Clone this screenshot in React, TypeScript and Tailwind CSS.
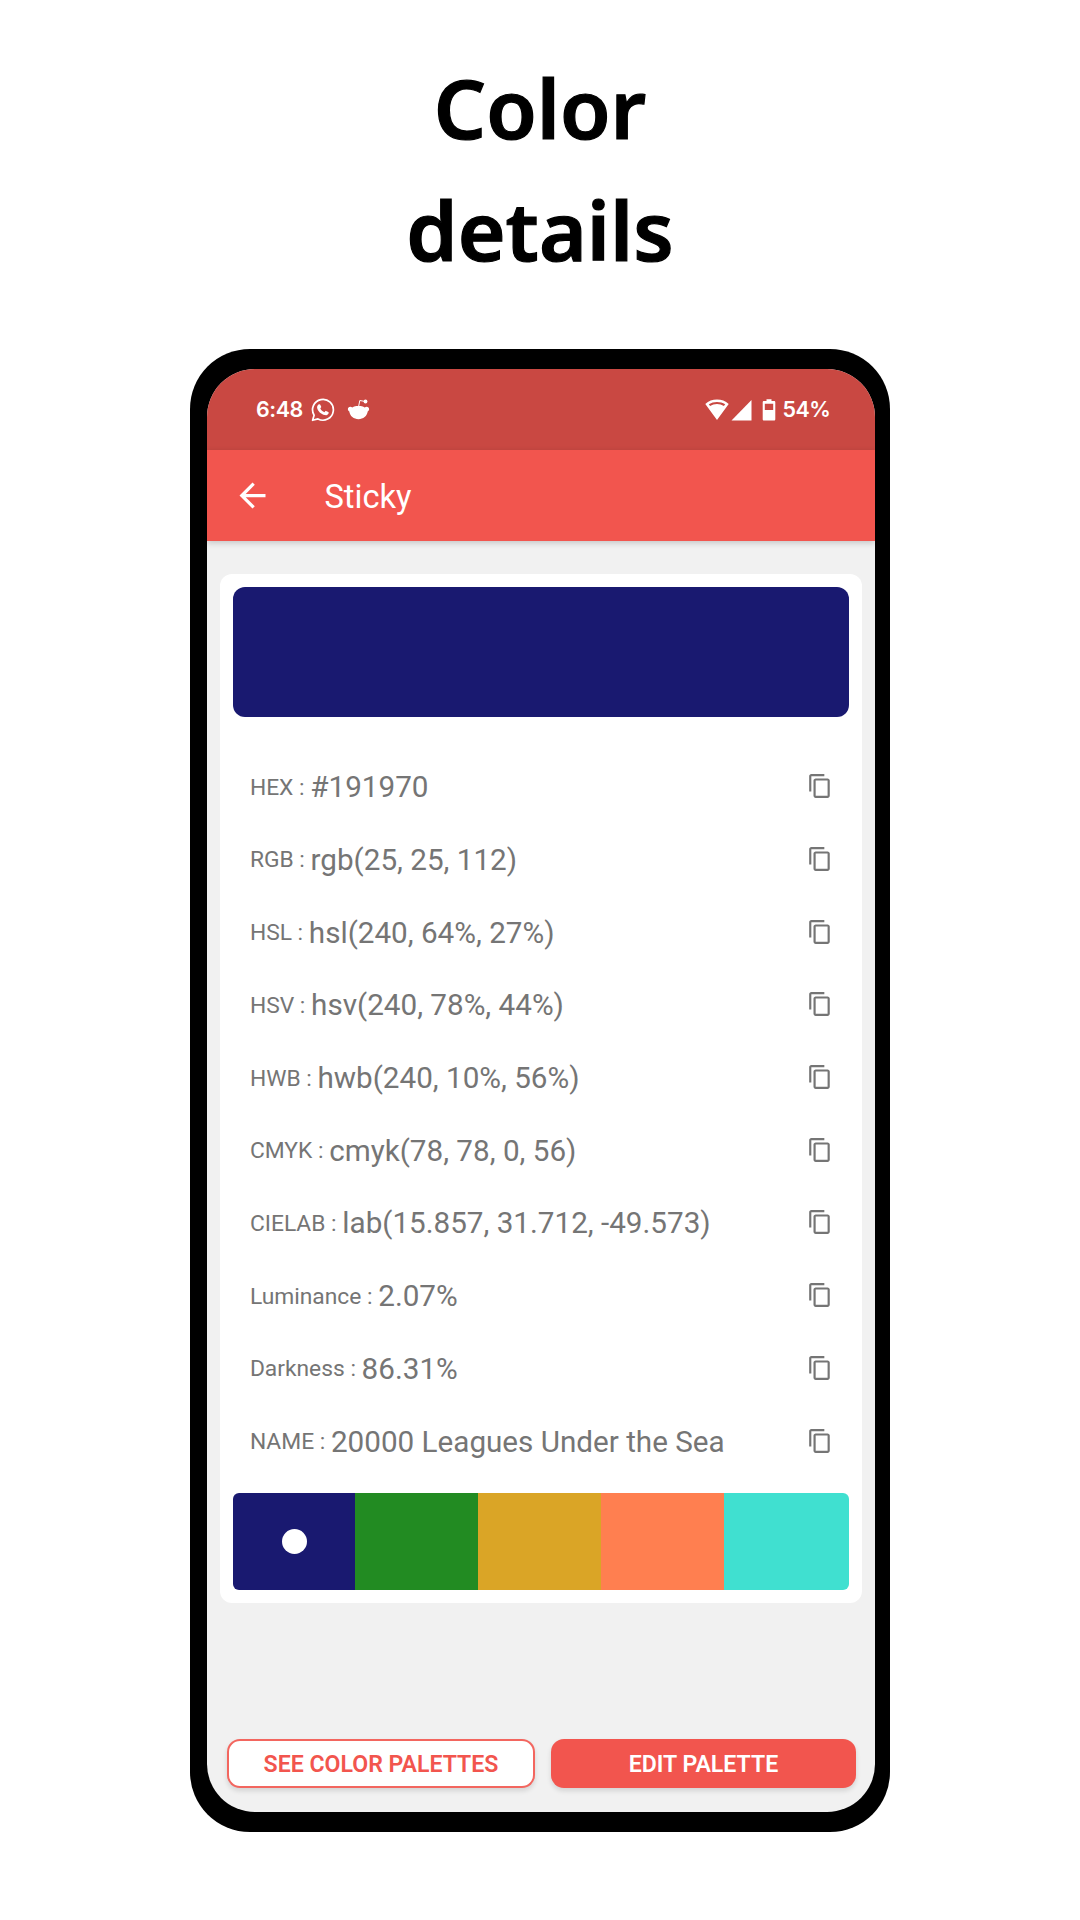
import React from "react";

const rows = [
  { label: "HEX", value: "#191970" },
  { label: "RGB", value: "rgb(25, 25, 112)" },
  { label: "HSL", value: "hsl(240, 64%, 27%)" },
  { label: "HSV", value: "hsv(240, 78%, 44%)" },
  { label: "HWB", value: "hwb(240, 10%, 56%)" },
  { label: "CMYK", value: "cmyk(78, 78, 0, 56)" },
  { label: "CIELAB", value: "lab(15.857, 31.712, -49.573)" },
  { label: "Luminance", value: "2.07%" },
  { label: "Darkness", value: "86.31%" },
  { label: "NAME", value: "20000 Leagues Under the Sea" },
];

function CopyIcon() {
  return (
    <svg className="-mt-px size-[26px] fill-[#757575]" viewBox="0 0 24 24">
      <path d="M16 1H4c-1.1 0-2 .9-2 2v14h2V3h12V1zm3 4H8c-1.1 0-2 .9-2 2v14c0 1.1.9 2 2 2h11c1.1 0 2-.9 2-2V7c0-1.1-.9-2-2-2zm0 16H8V7h11v14z" />
    </svg>
  );
}

function WhatsAppIcon() {
  return (
    <svg className="h-6 w-6" viewBox="0 0 24 24" fill="none">
      <path d="M1.6 22.3 3.1 17.2A10.4 10.4 0 1 1 7 20.900Z" stroke="white" strokeWidth="1.7" strokeLinejoin="round" />
      <path d="M8 6.300c.5-.3 1-.2 1.300.4l.9 2.100c.2.500-.6 1.200-.9 1.600.9 1.800 2.200 2.900 4.200 3.800.5-.5 1-1.500 1.500-1.300l2.300 1.100c.500.300.4.900.2 1.400-.6 1.500-2.200 2-3.700 1.700-3.800-.8-7.100-3.900-7.700-7.300-.2-1.500.7-2.900 1.900-3.500Z" fill="white" />
    </svg>
  );
}

function RedditIcon() {
  return (
    <svg className="ml-[12px] h-6 w-[23px]" viewBox="0 0 23 24">
      <path d="M11.500 8c2.600 0 4.500.5 6.200 1.400 2-1.500 4.600-.4 4.400 1.900 0 1-.6 1.800-1.400 2.300-.5 4.500-4.600 7.600-9.200 7.600s-8.700-3.100-9.200-7.600C1.500 13.100.9 12.300.9 11.300.7 9 3.300 7.900 5.300 9.400c1.700-.9 3.600-1.400 6.200-1.400Z" fill="white" />
      <path d="m11.600 8.500 1.200-6 5.500 1" stroke="white" strokeWidth="1" fill="none" />
      <circle cx="18.500" cy="3.500" r="1.900" fill="white" />
    </svg>
  );
}

function StatusBar() {
  return (
    <div className="flex h-[81px] items-center bg-[#c94842] pr-[46px] pl-[48.500px] text-white">
      <span className="w-[55.500px] font-['Inter'] text-[21.500px] font-semibold tracking-[-0.400px]">6:48</span>
      <WhatsAppIcon />
      <RedditIcon />
      <div className="ml-auto flex items-center">
        <svg className="h-6 w-6" viewBox="0 0 24 24" fill="white">
          <path d="M12 1.500C7.500 1.500 3.500 3 .3 5.900L12 22 23.700 5.900C20.500 3 16.500 1.500 12 1.500Zm0 2.400c2.900 0 5.700.8 8.200 2.400l-1.300 1.800A12.700 12.700 0 0 0 12 6.100c-2.500 0-4.900.7-6.900 2L3.800 6.300A15 15 0 0 1 12 3.900Z" fillRule="evenodd" />
        </svg>
        <svg className="ml-[2px] h-6 w-[21px]" viewBox="0 0 21 24" fill="white">
          <path d="M20.500 2v20.500H.5Z" />
        </svg>
        <svg className="ml-[10px] h-6 w-[14px]" viewBox="0 0 14 24" fill="white">
          <path d="M4.500 1.200h5V3H12c.8 0 1.300.5 1.300 1.300v16.900c0 .8-.5 1.300-1.300 1.300H2c-.8 0-1.300-.5-1.300-1.300V4.300C.7 3.500 1.200 3 2 3h2.500Zm-1.700 4.500V12h8.400V5.700Z" fillRule="evenodd" />
        </svg>
        <span className="ml-[6px] w-[47px] font-['Inter'] text-[21.500px] font-semibold tracking-[-0.500px]">54%</span>
      </div>
    </div>
  );
}

export default function App() {
  return (
    <div className="flex h-[1920px] w-[1080px] flex-col items-center bg-white font-['Roboto',sans-serif]">
      <h1 className="mt-[46px] h-[303px] text-center font-['Noto_Sans',sans-serif] text-[82px] leading-[122px] font-semibold text-black [-webkit-text-stroke:1.200px_black]">
        Color
        <br />
        details
      </h1>
      <main className="flex h-[1483px] w-[700px] flex-col rounded-[60px] bg-black pt-5 pr-[14.600px] pb-5 pl-[17.400px]">
        <div className="flex flex-1 flex-col overflow-hidden rounded-[48px] bg-[#f1f1f1]">
          <StatusBar />
          <header className="flex h-[91px] shrink-0 items-center bg-[#f2554e] pl-[26px] text-white shadow-[0_2px_6px_rgba(0,0,0,0.18)]">
            <svg className="size-[39px] fill-white" viewBox="0 0 24 24">
              <path d="M20 11H7.830l5.590-5.590L12 4l-8 8 8 8 1.410-1.410L7.830 13H20v-2z" />
            </svg>
            <span className="ml-[52px] pt-[5px] text-[32.700px]">Sticky</span>
          </header>
          <section className="mx-[13px] mt-[33px] flex h-[1028.500px] flex-col rounded-[12px] bg-white p-[13px] pb-[12.500px]">
            <div className="h-[129.500px] rounded-[12px] bg-[#191970]" />
            <ul className="mt-[34px] flex flex-col pr-[16px] pl-[16.500px] text-[#757575]">
              {rows.map((r) => (
                <li key={r.label} className="flex h-[72.700px] items-center">
                  <span className="pt-[2px] text-[22.800px] whitespace-pre">{r.label} : </span>
                  <span className="pt-[1.500px] text-[29.650px]">{r.value}</span>
                  <span className="ml-auto">
                    <CopyIcon />
                  </span>
                </li>
              ))}
            </ul>
            <div className="mt-auto flex h-[97.500px] overflow-hidden rounded-[6px]">
              <div className="flex w-[122px] items-center justify-center bg-[#191970]">
                <div className="size-[24.500px] rounded-full bg-white" />
              </div>
              <div className="w-[123px] bg-[#228b22]" />
              <div className="w-[123px] bg-[#daa526]" />
              <div className="w-[123px] bg-[#ff7f50]" />
              <div className="flex-1 bg-[#40e0d0]" />
            </div>
          </section>
          <div className="mt-auto mb-[24px] flex gap-[16px] pr-[19.500px] pl-[19.600px] text-[23.100px] font-semibold">
            <button className="h-[49px] w-[308px] rounded-[13px] border-2 border-[#f2554e]/90 bg-white pt-[3px] text-[#f2554e] shadow-[0_3px_5px_rgba(0,0,0,0.12)]">
              SEE COLOR PALETTES
            </button>
            <button className="h-[49px] flex-1 rounded-[13px] bg-[#f2554e] pt-[3px] text-white shadow-[0_3px_5px_rgba(0,0,0,0.12)]">
              EDIT PALETTE
            </button>
          </div>
        </div>
      </main>
    </div>
  );
}
